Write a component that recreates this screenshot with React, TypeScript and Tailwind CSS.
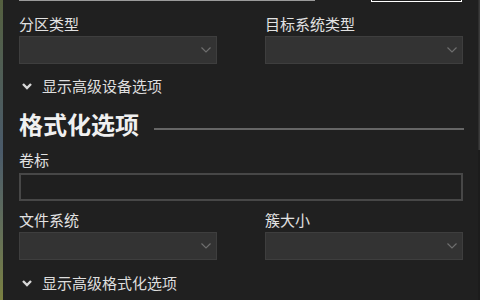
import React from "react";

function SelectBox() {
  return (
    <div className="mt-[2px] h-[28px] bg-[#333333] border border-[#3e3e3e] flex items-center justify-end pr-[5px]">
      <svg width="10" height="6" viewBox="0 0 10 6" fill="none">
        <path d="M0.5 0.5 L5 5 L9.5 0.5" stroke="#6e6e6e" strokeWidth="1.2" />
      </svg>
    </div>
  );
}

function Advanced({ text }: { text: string }) {
  return (
    <div className="flex items-center h-[20px] pl-[3px] gap-[10px]">
      <svg width="10" height="7" viewBox="0 0 10 7" fill="none">
        <path d="M1 1 L5 5 L9 1" stroke="#d8d8d8" strokeWidth="2.4" />
      </svg>
      <span className="text-[15px] leading-[20px] text-[#dedede]">{text}</span>
    </div>
  );
}

function Label({ text }: { text: string }) {
  return <div className="h-[20px] text-[15px] leading-[20px] text-[#e2e2e2]">{text}</div>;
}

export default function App() {
  return (
    <div className="w-[480px] h-[300px] flex overflow-hidden font-['Noto_Sans_CJK_SC','Microsoft_YaHei',sans-serif]">
      <div className="w-[3px] bg-gradient-to-b from-[#55603f] via-[#4a5a6a] to-[#7a8040]" />
      <div className="flex-1 bg-[#202020] pl-[16px] pr-[15px] flex flex-col">
        <div className="flex h-[2px] items-start shrink-0">
          <div className="w-[296px] h-[1px] bg-[#9b9b9b]" />
          <div className="ml-[56px] w-[91px] h-[2px] border-x border-b border-white" />
        </div>

        <div className="grid grid-cols-2 gap-x-[48px] mt-[12px]">
          <div>
            <Label text="分区类型" />
            <SelectBox />
          </div>
          <div>
            <Label text="目标系统类型" />
            <SelectBox />
          </div>
        </div>

        <div className="mt-[12px]">
          <Advanced text="显示高级设备选项" />
        </div>

        <div className="mt-[14px] flex items-start h-[28px]">
          <span className="text-[24px] leading-[28px] font-bold text-[#f0f0f0]">格式化选项</span>
          <div className="flex-1 ml-[15px] mr-[-1px] mt-[18px] h-[2px] bg-[#666666]" />
        </div>

        <div className="mt-[12px]">
          <Label text="卷标" />
          <div className="mt-[3px] h-[28px] border-2 border-[#474747] bg-[#1f1f1f]" />
        </div>

        <div className="grid grid-cols-2 gap-x-[48px] mt-[9px]">
          <div>
            <Label text="文件系统" />
            <SelectBox />
          </div>
          <div>
            <Label text="簇大小" />
            <SelectBox />
          </div>
        </div>

        <div className="mt-[13px]">
          <Advanced text="显示高级格式化选项" />
        </div>
      </div>
      <div className="w-[2px] flex flex-col">
        <div className="h-[150px] bg-[#2e2e2e] border-r border-[#3c3c3c]" />
        <div className="flex-1 bg-[#1c1c1c]" />
      </div>
    </div>
  );
}
